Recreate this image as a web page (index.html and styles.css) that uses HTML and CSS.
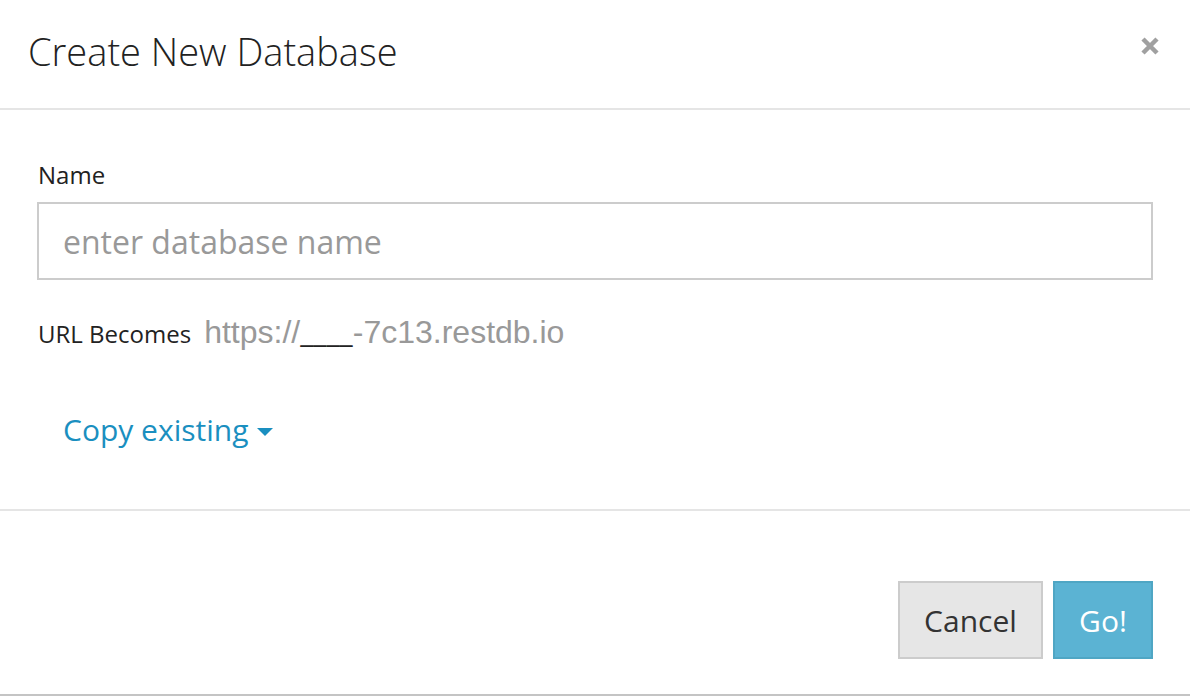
FILE: index.html
```html
<!DOCTYPE html>
<html>
<head>
<meta charset="utf-8">
<link rel="stylesheet" href="styles.css">
</head>
<body>
<div class="modal">
  <div class="modal-header">
    <h1 class="modal-title">Create New Database</h1>
    <span class="close">
      <svg width="20" height="20" viewBox="0 0 20 20"><path d="M3 3 L17 17 M17 3 L3 17" stroke="#a0a0a0" stroke-width="4.5" stroke-linecap="butt"/></svg>
    </span>
  </div>
  <div class="modal-body">
    <label class="field-label">Name</label>
    <div class="input">enter database name</div>
    <div class="url-row">
      <span class="url-label">URL Becomes</span>
      <span class="url-value">https://<span class="blank">____</span>-7c13.restdb.io</span>
    </div>
    <div class="copy-row">
      <span class="copy-link">Copy existing</span>
      <span class="caret"></span>
    </div>
  </div>
  <div class="modal-footer">
    <button class="btn btn-default">Cancel</button>
    <button class="btn btn-primary">Go!</button>
  </div>
</div>
</body>
</html>
```
FILE: styles.css
```css
html, body {
  margin: 0;
  padding: 0;
  background: #fff;
}
body {
  font-family: "Open Sans", "Liberation Sans", sans-serif;
  width: 1190px;
  height: 696px;
  overflow: hidden;
}
.modal {
  height: 694px;
  border-bottom: 2px solid #c4c4c4;
  display: flex;
  flex-direction: column;
}
.modal-header {
  border-bottom: 2px solid #e5e5e5;
  display: flex;
  align-items: center;
  justify-content: space-between;
  padding: 0 30px 0 28px;
  box-sizing: border-box;
  height: 110px;
}
.modal-title {
  margin: 0;
  font-weight: 300;
  font-size: 38px;
  color: #222;
  line-height: 1;
  padding-bottom: 6px;
}
.close {
  display: flex;
  padding-bottom: 16px;
}
.modal-body {
  height: 401px;
  box-sizing: border-box;
  border-bottom: 2px solid #e5e5e5;
  padding: 50px 37px 0 37px;
}
.field-label {
  display: block;
  font-size: 24px;
  color: #222;
  line-height: 30px;
  padding-left: 1px;
  margin-bottom: 12px;
}
.input {
  height: 78px;
  box-sizing: border-box;
  border: 2px solid #cccccc;
  padding-left: 24px;
  display: flex;
  align-items: center;
  font-size: 32px;
  color: #999;
}
.url-row {
  margin-top: 31px;
  display: flex;
  align-items: baseline;
  padding-left: 1px;
}
.url-label {
  font-size: 24px;
  color: #222;
  margin-right: 13px;
}
.url-value {
  font-family: "Liberation Sans", Arial, sans-serif;
  font-size: 32px;
  color: #999;
}
.url-value .blank {
  font-family: "Open Sans", sans-serif;
  font-size: 30px;
  color: #222;
}
.copy-row {
  margin-top: 57px;
  padding-left: 26px;
  display: flex;
  align-items: center;
}
.copy-link {
  font-size: 30px;
  color: #1a8fc0;
}
.caret {
  width: 0;
  height: 0;
  border-left: 8px solid transparent;
  border-right: 8px solid transparent;
  border-top: 8px solid #1a8fc0;
  margin-left: 8px;
  margin-top: 4px;
}
.modal-footer {
  flex: 1;
  display: flex;
  justify-content: flex-end;
  align-items: flex-start;
  padding: 70px 37px 0 0;
  gap: 10px;
}
.btn {
  font-family: "Open Sans", "Liberation Sans", sans-serif;
  font-size: 30px;
  height: 78px;
  border: 2px solid;
  border-radius: 0;
  margin: 0;
  cursor: pointer;
}
.btn-default {
  width: 145px;
  background: #e6e6e6;
  border-color: #cccccc;
  color: #333;
}
.btn-primary {
  width: 100px;
  background: #5bb3d3;
  border-color: #4fa6c4;
  color: #fff;
}
```
